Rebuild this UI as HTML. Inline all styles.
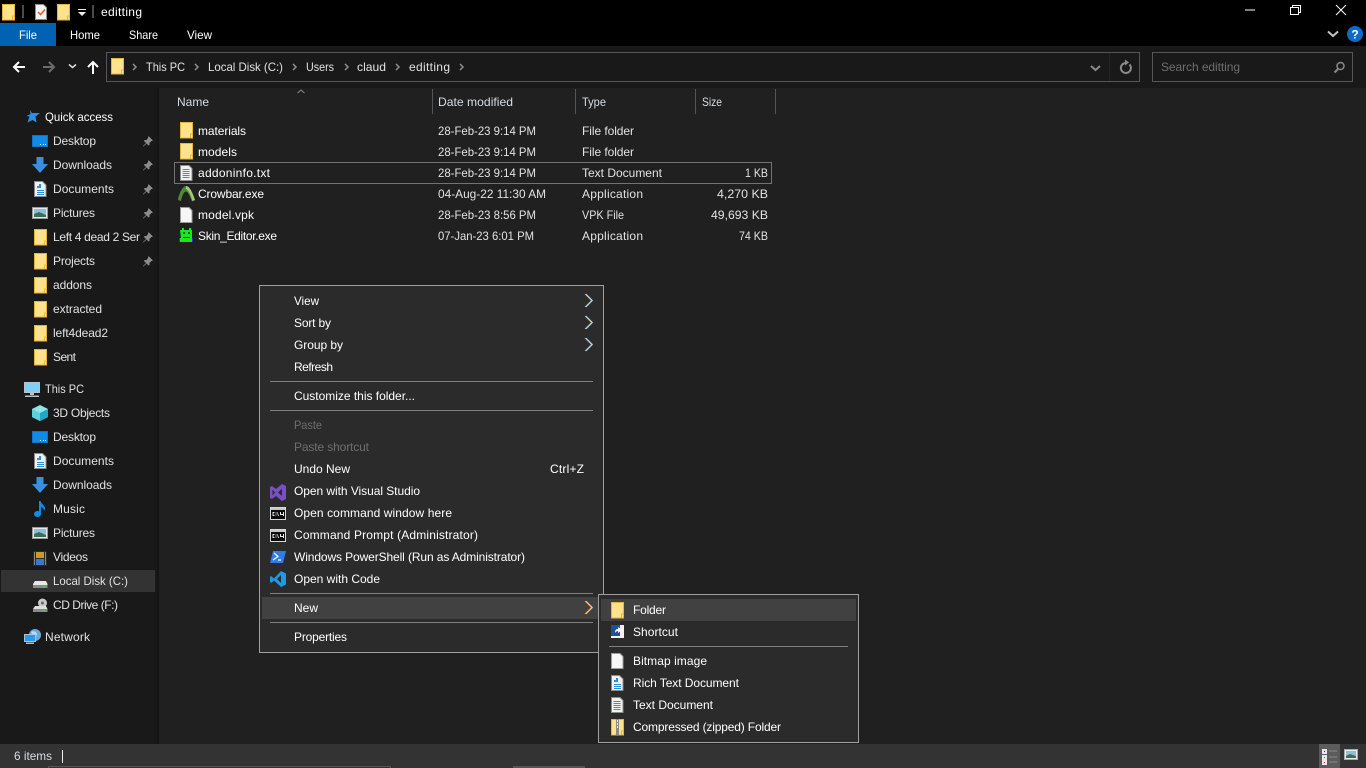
<!DOCTYPE html>
<html><head><meta charset="utf-8"><title>editting</title>
<style>
html,body{margin:0;padding:0;background:#202020;overflow:hidden}
svg{display:block;position:absolute;left:0;top:0}
text{font-family:"Liberation Sans",sans-serif;font-size:12px;fill:#fff}
.g{fill:#e2e2e2}
.d{fill:#6e6e6e}
.h{fill:#d6dde2}
</style></head><body>
<svg width="1366" height="768" viewBox="0 0 1366 768" xmlns="http://www.w3.org/2000/svg">
<defs>
<g id="f"><path d="M.5.5h12v15.500H.5z" fill="#FFE28C" stroke="#E6B63C"/><path d="M10 11.500h3V16.500h-3z" fill="#E6B63C"/><path d="M11 12.500h1v3h-1z" fill="#FFE28C"/></g>
<g id="pin"><path d="M5.500 0L10 4.500 8.500 5 6.500 7v2L5.500 9.500l-2-2-3 3L0 10l3-3-2-2 .5-1h2L5 2z" fill="#8c8c8c"/></g>
<g id="desk"><rect x=".5" y=".5" width="15" height="11" fill="#0d8ce8" stroke="#1670c4"/><path d="M8 9h1v1H8zM11 9h1v1h-1zM13 9h1v1h-1z" fill="#fff"/></g>
<g id="dl"><path d="M4.500 0h7v7H16l-8 9-8-9h4.500z" fill="#3a8fe0"/></g>
<g id="doc"><path d="M.5.500h8l3.500 3.500v11.500H.5z" fill="#f1f1f1" stroke="#8a8a8a"/><path d="M5 3h2v4H3V5h2zM3 9h7v1H3zM3 11h7v1H3zM3 13h7v1H3z" fill="#2a8fd8"/></g>
<g id="pic"><rect x=".5" y=".5" width="15" height="11" fill="#e8e8e8" stroke="#9a9a9a"/><rect x="2" y="2" width="12" height="8" fill="#8cc0d8"/><path d="M2 7l5-2 7 3v2H2z" fill="#3d6e55"/></g>
<g id="txt"><path d="M.5.500h8.500l3 3v12H.5z" fill="#f2f2f2" stroke="#8c8c8c"/><path d="M2.500 4h7v1h-7zM2.500 6h7v1h-7zM2.500 8h7v1h-7zM2.500 10h7v1h-7zM2.500 12h7v1h-7z" fill="#7d7d7d"/></g>
<g id="blank"><path d="M.5.500h8.500l3 3v12H.5z" fill="#f7f7f7" stroke="#9c9c9c"/></g>
<g id="cmd"><rect x=".5" y=".5" width="15" height="12" fill="#0c0c0c" stroke="#d8d8d8"/><rect x="1" y="1" width="14" height="2" fill="#c8c8c8"/><path d="M2.500 5h2v1h-2zM2.500 6h1v2h-1zM2.500 8h2v1h-2zM5.500 5.500h1v1h-1zM5.500 7.500h1v1h-1zM7.500 5l1.500 4h-1L7 5zM10 5h1v2h2v-2h1v4h-1v-1h-3z" fill="#e8e8e8"/></g>
<g id="arr"><polyline points="-.6,0 5.900,6.500 -.6,13" fill="none" stroke="#e8902a" stroke-width=".8"/><polyline points=".6,0 7.100,6.500 .6,13" fill="none" stroke="#8cc8f4" stroke-width=".8"/><polyline points="0,0 6.500,6.500 0,13" fill="none" stroke="#f4f4f4" stroke-width=".5"/></g>
<path id="crumb" d="M0 0l3 3-3 3" fill="none" stroke="#8f8f8f" stroke-width="1.500"/>
</defs>

<!-- base layers -->
<rect width="1366" height="46" fill="#000"/>
<rect y="46" width="1366" height="42" fill="#191919"/>
<rect y="88" width="157" height="656" fill="#191919"/>
<rect x="157" y="88" width="2" height="656" fill="#141414"/>
<rect x="159" y="88" width="1207" height="656" fill="#202020"/>
<rect y="744" width="1366" height="24" fill="#333"/>

<!-- title bar -->
<use href="#f" x="2" y="4"/>
<rect x="22" y="5" width="2" height="13" fill="#4a4a4a"/>
<path d="M35.500 4.500h8l3 3v12h-11z" fill="#f4f4f4" stroke="#8c8c8c"/>
<path d="M38 12l2.500 2.500L45 9.500" fill="none" stroke="#e8572a" stroke-width="1.500"/>
<use href="#f" x="57" y="4"/>
<path d="M78 9h8v1h-8zM78 12h8l-4 4z" fill="#eee"/>
<rect x="92" y="5" width="2" height="13" fill="#4a4a4a"/>
<text x="101" y="16" textLength="41">editting</text>
<path d="M1245 10h10" stroke="#fff" fill="none"/>
<path d="M1290.500 7.500h8v7h-8zM1292.500 7V5.500h8v7H1299" stroke="#fff" fill="none"/>
<path d="M1336 5l10 10M1346 5l-10 10" stroke="#fff" fill="none"/>

<!-- ribbon tabs -->
<rect y="23" width="56" height="23" fill="#0063B1"/>
<text x="19" y="39" textLength="18" lengthAdjust="spacingAndGlyphs">File</text>
<text x="70" y="39" textLength="30" lengthAdjust="spacingAndGlyphs">Home</text>
<text x="129" y="39" textLength="29" lengthAdjust="spacingAndGlyphs">Share</text>
<text x="187" y="39" textLength="25" lengthAdjust="spacingAndGlyphs">View</text>
<path d="M1328 31.500l5 4.500 5-4.500" fill="none" stroke="#c4c4c4" stroke-width="2"/>
<circle cx="1355" cy="34" r="8" fill="#0a6cc8"/>
<text x="1355" y="38.500" text-anchor="middle" style="font-weight:700;font-size:12px">?</text>

<!-- nav -->
<path d="M25 67H14.500M19 62l-5 5 5 5" fill="none" stroke="#fff" stroke-width="2"/>
<path d="M43 67h10.500M49 62l5 5-5 5" fill="none" stroke="#6c6c6c" stroke-width="2"/>
<path d="M69 64.500l3.500 3 3.500-3" fill="none" stroke="#ddd" stroke-width="1.500"/>
<path d="M93 74V62M88 67l5-5 5 5" fill="none" stroke="#fff" stroke-width="2"/>
<rect x="106.500" y="52.500" width="1033" height="29" fill="#191919" stroke="#565656"/>
<use href="#f" x="111" y="58"/>
<use href="#crumb" x="133" y="64"/>
<text x="146" y="71" class="g" textLength="39" lengthAdjust="spacingAndGlyphs">This PC</text>
<use href="#crumb" x="195" y="64"/>
<text x="208" y="71" class="g" textLength="75" lengthAdjust="spacingAndGlyphs">Local Disk (C:)</text>
<use href="#crumb" x="293" y="64"/>
<text x="306" y="71" class="g" textLength="28" lengthAdjust="spacingAndGlyphs">Users</text>
<use href="#crumb" x="345" y="64"/>
<text x="357" y="71" class="g" textLength="29" lengthAdjust="spacingAndGlyphs">claud</text>
<use href="#crumb" x="396" y="64"/>
<text x="409" y="71" class="g" textLength="41">editting</text>
<use href="#crumb" x="460" y="64"/>
<path d="M1091 66l4.500 4 4.500-4" fill="none" stroke="#8a8a8a" stroke-width="2"/>
<rect x="1109" y="53" width="1" height="28" fill="#252525"/>
<path d="M1129.500 64.500a5 5 0 1 1-3-1.500" fill="none" stroke="#8a8a8a" stroke-width="2"/>
<path d="M1125 59.500v6l4-3z" fill="#8a8a8a"/>
<rect x="1152.500" y="52.500" width="200" height="29" fill="#191919" stroke="#565656"/>
<text x="1161" y="71" class="d" textLength="79">Search editting</text>
<circle cx="1340.500" cy="66" r="3.500" fill="none" stroke="#8a8a8a" stroke-width="1.500"/>
<path d="M1338 69l-3.500 3.500" stroke="#8a8a8a" stroke-width="2"/>

<!-- sidebar -->
<path d="M30 110l2 3h8l-4.500 3.500 1 6-4-2.500-5 2.500 2-6-3-.5 4-2z" fill="#2b8fe6"/>
<text x="45" y="121" textLength="68" lengthAdjust="spacingAndGlyphs">Quick access</text>
<use href="#desk" x="32" y="135"/><text x="53" y="145" class="g" textLength="43">Desktop</text>
<use href="#dl" x="32" y="157"/><text x="53" y="169" class="g" textLength="59">Downloads</text>
<use href="#doc" x="34" y="181"/><text x="53" y="193" class="g" textLength="61">Documents</text>
<use href="#pic" x="32" y="207"/><text x="53" y="217" class="g" textLength="42">Pictures</text>
<use href="#f" x="34" y="229"/><text x="53" y="241" class="g" textLength="87">Left 4 dead 2 Ser</text>
<use href="#f" x="34" y="253"/><text x="53" y="265" class="g" textLength="42">Projects</text>
<use href="#f" x="34" y="277"/><text x="53" y="289" class="g" textLength="39">addons</text>
<use href="#f" x="34" y="301"/><text x="53" y="313" class="g" textLength="49">extracted</text>
<use href="#f" x="34" y="325"/><text x="53" y="337" class="g" textLength="55">left4dead2</text>
<use href="#f" x="34" y="349"/><text x="53" y="361" class="g" textLength="23">Sent</text>
<use href="#pin" x="143" y="136"/><use href="#pin" x="143" y="160"/><use href="#pin" x="143" y="184"/><use href="#pin" x="143" y="208"/><use href="#pin" x="143" y="232"/><use href="#pin" x="143" y="256"/>

<rect x="24.500" y="382.500" width="15" height="10" fill="#7fd0f8" stroke="#b8c4cc"/>
<path d="M30 393h4v2h-4zM25 395.500h14v1.500H25z" fill="#b8c4cc"/>
<text x="45" y="393" class="g" textLength="39" lengthAdjust="spacingAndGlyphs">This PC</text>
<path d="M40 405l8 4v8l-8 4-8-4v-8z" fill="#8fe6e6"/><path d="M40 413l8-4v8l-8 4z" fill="#1fa8c8"/><path d="M40 413v8l-8-4v-8z" fill="#5cd0dc"/>
<text x="53" y="417" class="g" textLength="57">3D Objects</text>
<use href="#desk" x="32" y="431"/><text x="53" y="441" class="g" textLength="43">Desktop</text>
<use href="#doc" x="34" y="453"/><text x="53" y="465" class="g" textLength="61">Documents</text>
<use href="#dl" x="32" y="477"/><text x="53" y="489" class="g" textLength="59">Downloads</text>
<ellipse cx="37.500" cy="514" rx="3.500" ry="3" fill="#0c8ee8"/><path d="M39 514v-13h1.500c.5 3 4.500 4 4.500 8l-1 2c0-2-1.500-3.500-3-4v7z" fill="#0c8ee8"/>
<text x="53" y="513" class="g" textLength="32">Music</text>
<use href="#pic" x="32" y="527"/><text x="53" y="537" class="g" textLength="42">Pictures</text>
<rect x="33" y="551" width="14" height="15" fill="#2a2a2a"/><rect x="36" y="552" width="8" height="6" fill="#c89a28"/><rect x="36" y="559" width="8" height="6" fill="#3a78c8"/><path d="M34 552h1v13h-1zM45 552h1v13h-1z" fill="#888"/>
<text x="53" y="561" class="g" textLength="35">Videos</text>
<rect x="1" y="570" width="154" height="22" fill="#333"/>
<path d="M35 581h11l1.500 3v4H33v-4z" fill="#e8e8e8"/><path d="M33 585h14.500v3H33z" fill="#8a8a8a"/><rect x="43" y="586" width="2" height="1" fill="#3fd04f"/>
<text x="53" y="585" class="g" textLength="75" lengthAdjust="spacingAndGlyphs">Local Disk (C:)</text>
<circle cx="42.500" cy="603" r="4.500" fill="#c8c8c8"/><circle cx="42.500" cy="603" r="1.500" fill="#6a6a6a"/>
<path d="M35 606h11l1.500 3v3H33v-3z" fill="#dedede"/><path d="M33 609h14.500v3H33z" fill="#8a8a8a"/><rect x="43" y="610" width="2" height="1" fill="#3fd04f"/>
<text x="53" y="609" class="g" textLength="65">CD Drive (F:)</text>
<circle cx="35" cy="635" r="6" fill="#6ea8d8"/><path d="M31 632c3-2 6 0 6 3l-3 3z" fill="#b8dcf4"/>
<rect x="24.500" y="634.500" width="11" height="7" fill="#2a9ae8" stroke="#a8c4d8"/><path d="M26 642.500h8V644h-8z" fill="#a8c4d8"/>
<text x="45" y="641" class="g" textLength="45">Network</text>

<!-- list header -->
<path d="M297.500 93l3.500-3 3.500 3" fill="none" stroke="#8a8a8a"/>
<text x="177" y="106" class="h" textLength="32" lengthAdjust="spacingAndGlyphs">Name</text>
<text x="438" y="106" class="h" textLength="75" lengthAdjust="spacingAndGlyphs">Date modified</text>
<text x="582" y="106" class="h" textLength="24" lengthAdjust="spacingAndGlyphs">Type</text>
<text x="702" y="106" class="h" textLength="20" lengthAdjust="spacingAndGlyphs">Size</text>
<path d="M432.500 89v25M575.500 89v25M695.500 89v25M775.500 89v25" stroke="#555"/>

<!-- list rows -->
<rect x="174.500" y="162.500" width="597" height="21" fill="none" stroke="#737373"/>
<use href="#f" x="180" y="122"/><text x="198" y="135" textLength="48">materials</text>
<text x="438" y="135" class="g" textLength="98" lengthAdjust="spacingAndGlyphs">28-Feb-23 9:14 PM</text><text x="582" y="135" class="g" textLength="52">File folder</text>
<use href="#f" x="180" y="143"/><text x="198" y="156" textLength="39">models</text>
<text x="438" y="156" class="g" textLength="98" lengthAdjust="spacingAndGlyphs">28-Feb-23 9:14 PM</text><text x="582" y="156" class="g" textLength="52">File folder</text>
<use href="#txt" x="180" y="165"/><text x="198" y="177" textLength="72">addoninfo.txt</text>
<text x="438" y="177" class="g" textLength="98" lengthAdjust="spacingAndGlyphs">28-Feb-23 9:14 PM</text><text x="582" y="177" class="g" textLength="80">Text Document</text><text x="745" y="177" class="g" textLength="23" lengthAdjust="spacingAndGlyphs">1 KB</text>
<path d="M178 200c1-7 5-14 8-14 4 0 7 8 9 14l-3 1.500c-2-5-4-10-6-10s-4 4-5 9.500z" fill="#4f8a34"/><path d="M186 186c4 0 7 8 9 14l-2.500 1c-2-6-3-10-6.500-12z" fill="#a4c878"/>
<text x="198" y="198" textLength="66">Crowbar.exe</text>
<text x="438" y="198" class="g" textLength="108" lengthAdjust="spacingAndGlyphs">04-Aug-22 11:30 AM</text><text x="582" y="198" class="g" textLength="61">Application</text><text x="717" y="198" class="g" textLength="51" lengthAdjust="spacingAndGlyphs">4,270 KB</text>
<use href="#blank" x="180" y="207"/><text x="198" y="219" textLength="56">model.vpk</text>
<text x="438" y="219" class="g" textLength="98" lengthAdjust="spacingAndGlyphs">28-Feb-23 8:56 PM</text><text x="582" y="219" class="g" textLength="42" lengthAdjust="spacingAndGlyphs">VPK File</text><text x="711" y="219" class="g" textLength="57" lengthAdjust="spacingAndGlyphs">49,693 KB</text>
<path d="M180 230h2v-2h2v2h5v-2h2v2h1v8h1v4h-13v-4h1z" fill="#1ee61e"/>
<path d="M179 238h1v4h-1zM192 238h1v4h-1z" fill="#1a3cc8"/>
<path d="M183 232h2v2h-2zM188 232h2v2h-2zM183 237h7v1h-7z" fill="#0a5a0a"/>
<text x="198" y="240" textLength="79">Skin_Editor.exe</text>
<text x="438" y="240" class="g" textLength="96" lengthAdjust="spacingAndGlyphs">07-Jan-23 6:01 PM</text><text x="582" y="240" class="g" textLength="61">Application</text><text x="739" y="240" class="g" textLength="29" lengthAdjust="spacingAndGlyphs">74 KB</text>

<!-- context menu -->
<rect x="259.500" y="285.500" width="344" height="367" fill="#2b2b2b" stroke="#a0a0a0"/>
<path d="M270 381.500h323M270 410.500h323M270 593.500h323M270 622.500h323" stroke="#808080"/>
<rect x="262" y="597" width="339" height="22" fill="#414141"/>
<text x="294" y="305" textLength="25" lengthAdjust="spacingAndGlyphs">View</text><use href="#arr" x="585.500" y="294"/>
<text x="294" y="327" textLength="37">Sort by</text><use href="#arr" x="585.500" y="316"/>
<text x="294" y="349" textLength="49">Group by</text><use href="#arr" x="585.500" y="338"/>
<text x="294" y="371" textLength="39">Refresh</text>
<text x="294" y="400" textLength="121">Customize this folder...</text>
<text x="294" y="429" class="d" textLength="28" lengthAdjust="spacingAndGlyphs">Paste</text>
<text x="294" y="451" class="d" textLength="75">Paste shortcut</text>
<text x="294" y="473" textLength="56">Undo New</text><text x="550" y="473" textLength="34">Ctrl+Z</text>
<path d="M270 487l2-1 4 3 6-5 4 2v13l-4 2-6-5-4 3-2-1zM272.500 489.500v6l2.500-3zM282 488.500l-4 4 4 3.500z" fill="#7a4fc4" fill-rule="evenodd"/>
<text x="294" y="495" textLength="126">Open with Visual Studio</text>
<use href="#cmd" x="270" y="507"/><text x="294" y="517" textLength="158">Open command window here</text>
<use href="#cmd" x="270" y="529"/><text x="294" y="539" textLength="184">Command Prompt (Administrator)</text>
<path d="M273 551h13l-3 12h-13z" fill="#2f7de8"/><path d="M274 553l4 3.500-5 3.500M278 560h3" fill="none" stroke="#fff" stroke-width="1.200"/>
<text x="294" y="561" textLength="231">Windows PowerShell (Run as Administrator)</text>
<path d="M281 571l5 2.500v11l-5 2.500-7-6.500-3 2.500-1-1v-5l1-1 3 2.500zM281 575l-4 4 4 4z" fill="#1c9ae8" fill-rule="evenodd"/>
<text x="294" y="583" textLength="86">Open with Code</text>
<text x="294" y="612" textLength="24" lengthAdjust="spacingAndGlyphs">New</text><use href="#arr" x="585.500" y="601"/>
<text x="294" y="641" textLength="53">Properties</text>

<!-- submenu -->
<rect x="598.500" y="594.500" width="260" height="148" fill="#2b2b2b" stroke="#a0a0a0"/>
<rect x="601" y="599" width="255" height="22" fill="#414141"/>
<path d="M609 646.500h239" stroke="#808080"/>
<use href="#f" x="611" y="602"/><text x="633" y="614" textLength="33">Folder</text>
<rect x="611" y="625" width="13" height="13" fill="#f2f2f2"/><rect x="611" y="625" width="9" height="11" fill="#1c4f9c"/><path d="M615 633c0-3 1-4 3-4v-2l4 3-4 3v-2c-1 0-2 .5-3 2z" fill="#fff"/>
<text x="633" y="636" textLength="45">Shortcut</text>
<use href="#blank" x="611" y="653"/><text x="633" y="665" textLength="74">Bitmap image</text>
<use href="#doc" x="611" y="675"/><text x="633" y="687" textLength="106">Rich Text Document</text>
<use href="#txt" x="611" y="697"/><text x="633" y="709" textLength="80">Text Document</text>
<use href="#f" x="611" y="719"/><rect x="616" y="719" width="3" height="16" fill="#8a8a8a"/><path d="M617 720h1v2h-1zM617 723h1v2h-1zM617 726h1v2h-1z" fill="#eee"/>
<text x="633" y="731" textLength="148">Compressed (zipped) Folder</text>

<!-- status bar -->
<text x="14" y="760" class="h" textLength="38" lengthAdjust="spacingAndGlyphs">6 items</text>
<rect x="62" y="750" width="1" height="13" fill="#eee"/>
<path d="M48.500 768v-1.500h342V768" fill="none" stroke="#555"/>
<rect x="513" y="766" width="72" height="2" fill="#555"/>
<rect x="1319" y="744" width="21" height="24" fill="#5c5c5c"/>
<rect x="1322" y="749" width="5" height="5" fill="#e8e8e8"/><rect x="1324" y="751" width="1" height="1" fill="#333"/>
<rect x="1322" y="755" width="5" height="5" fill="#e8e8e8"/><rect x="1324" y="757" width="1" height="1" fill="#2a7fd8"/>
<rect x="1322" y="760" width="5" height="5" fill="#e8e8e8"/><rect x="1324" y="762" width="1" height="1" fill="#c82a2a"/>
<path d="M1329 751h8M1329 757h8M1329 762h8" stroke="#8a8a8a"/>
<rect x="1344.500" y="749.500" width="13" height="10" fill="#e8e8e8" stroke="#aaa"/><rect x="1346" y="751" width="10" height="7" fill="#8cc0d8"/><path d="M1346 756l4-2 6 2v2h-10z" fill="#3d6e55"/>
</svg>
</body></html>
